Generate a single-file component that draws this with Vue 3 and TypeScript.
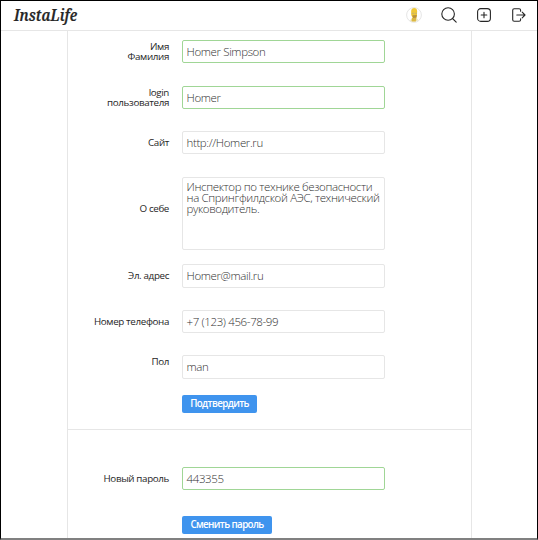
<script setup lang="ts">
interface Field {
  id: string
  label: string[]
  value: string[]
  valid?: boolean
}

const profile: Field[] = [
  { id: 'name', label: ['Имя', 'Фамилия'], value: ['Homer Simpson'], valid: true },
  { id: 'login', label: ['login', 'пользователя'], value: ['Homer'], valid: true },
  { id: 'site', label: ['Сайт'], value: ['http://Homer.ru'] },
  {
    id: 'about',
    label: ['О себе'],
    value: ['Инспектор по технике безопасности', 'на Спрингфилдской АЭС, технический', 'руководитель.'],
  },
  { id: 'email', label: ['Эл. адрес'], value: ['Homer@mail.ru'] },
  { id: 'phone', label: ['Номер телефона'], value: ['+7 (123) 456-78-99'] },
  { id: 'gender', label: ['Пол'], value: ['man'] },
]
const password: Field = { id: 'password', label: ['Новый пароль'], value: ['443355'], valid: true }
</script>

<template>
  <div class="page">
    <header class="header">
      <div class="logo">InstaLife</div>
      <nav class="nav">
        <svg class="avatar" viewBox="0 0 16 16">
          <circle cx="8" cy="8" r="7.4" fill="#fff" stroke="#dedede" stroke-width=".8" />
          <path d="M5.2 3.8Q5.6 1 8.2 1Q11.1 1.1 11.1 4.2L11 8.7L10.2 11.3H6.8L5.2 8Z" fill="#efc838" />
          <path d="M6.4 8.2L10.8 8L10.3 10.8L7 11Z" fill="#b8923f" />
          <path d="M5.8 5.8H8V7.1H5.8ZM8.7 5.8H11V7H8.7Z" fill="#cdb765" />
          <path d="M3.8 13.4L6 11H10.6L12.3 13.2Q8.5 15.8 3.8 13.4Z" fill="#eee3b8" />
          <path d="M6 11H10.2L9.8 14.4H5.6Z" fill="#dcb843" />
        </svg>
        <svg class="icon search" viewBox="0 0 16 16">
          <circle cx="7.1" cy="7" r="6.3" /><path d="M11.5 11.5L15.2 15.2" />
        </svg>
        <svg class="icon add" viewBox="0 0 14 14">
          <rect x=".6" y=".6" width="12.8" height="12.8" rx="3.2" /><path d="M7 4.2V9.8M4.2 7H9.8" />
        </svg>
        <svg class="icon exit" viewBox="0 0 14 14">
          <path d="M8.6 3.2V2.2Q8.6.7 7.1.7H2.2Q.7.7.7 2.2V11.8Q.7 13.3 2.2 13.3H7.1Q8.6 13.3 8.6 11.8V10.8M4.8 7H13M10.2 4.2L13 7L10.2 9.8" />
        </svg>
      </nav>
    </header>

    <main class="card">
      <section class="profile">
        <div v-for="f in profile" :key="f.id" class="row" :class="f.id">
          <div class="label"><div v-for="l in f.label" :key="l">{{ l }}</div></div>
          <div class="field" :class="{ valid: f.valid }"><div v-for="v in f.value" :key="v">{{ v }}</div></div>
        </div>
        <button class="button submit">Подтвердить</button>
      </section>
      <section class="security">
        <div class="row">
          <div class="label"><div>{{ password.label[0] }}</div></div>
          <div class="field valid"><div>{{ password.value[0] }}</div></div>
        </div>
        <button class="button change">Сменить пароль</button>
      </section>
    </main>
  </div>
</template>

<style>
body {
  margin: 0;
  overflow: hidden;
}
</style>

<style scoped>
.page {
  box-sizing: border-box;
  display: flex;
  flex-direction: column;
  width: 538px;
  height: 540px;
  overflow: hidden;
  border: 1px solid #000;
  border-bottom: 2px solid #808080;
  background: #fff;
  font-family: "Open Sans", "Noto Sans", sans-serif;
}
.header {
  box-sizing: border-box;
  display: flex;
  flex: none;
  align-items: center;
  justify-content: space-between;
  height: 30px;
  padding: 0 11.5px 2px 13px;
  border-bottom: 1px solid #e6e6e6;
}
.logo {
  color: #262626;
  font: italic 600 16.5px/20px "Noto Serif", "Droid Serif", "Liberation Serif", serif;
  -webkit-text-stroke: 0.2px #262626;
  transform: scaleX(0.865);
  transform-origin: left center;
}
.nav {
  display: flex;
  align-items: center;
}
.avatar {
  width: 16px;
  height: 16px;
}
.icon {
  fill: none;
  stroke: #262626;
  stroke-width: 1.1;
  stroke-linecap: round;
  stroke-linejoin: round;
}
.search {
  width: 16px;
  height: 16px;
  margin-left: 19px;
}
.add {
  width: 14px;
  height: 14px;
  margin-left: 20px;
}
.exit {
  width: 14px;
  height: 14px;
  margin-left: 21px;
}
.card {
  box-sizing: border-box;
  flex: 1;
  width: 405px;
  margin-left: 66px;
  border: solid #e6e6e6;
  border-width: 0 1px;
}
.profile {
  box-sizing: border-box;
  height: 399px;
  padding-top: 9px;
  border-bottom: 1px solid #e6e6e6;
}
.security {
  padding-top: 37px;
}
.row {
  display: grid;
  grid-template-columns: 101px 203px;
  column-gap: 13px;
  align-items: center;
  height: 23px;
  margin-bottom: 23px;
}
.login {
  margin-bottom: 22px;
}
.about {
  height: 73px;
  margin-bottom: 14px;
}
.about .label {
  margin-top: -10px;
}
.email {
  height: 24px;
  margin-bottom: 22px;
}
.phone {
  margin-bottom: 22px;
}
.gender {
  height: 24px;
  margin-bottom: 16px;
}
.gender .label {
  margin-top: -10px;
}
.label {
  color: #262626;
  font-size: 9.8px;
  line-height: 9.5px;
  letter-spacing: -0.36px;
  text-align: right;
  white-space: nowrap;
}
.field {
  box-sizing: border-box;
  height: 100%;
  padding: 4px 3px 0 3.5px;
  border: 1px solid #e6e6e6;
  border-radius: 2px;
  color: #333;
  font-size: 11.5px;
  font-weight: 300;
  line-height: 13px;
  letter-spacing: -0.37px;
  white-space: nowrap;
}
.about .field {
  line-height: 10.8px;
}
.valid {
  border-color: #a0d696;
}
.button {
  display: block;
  height: 18px;
  margin: 0 0 0 114px;
  padding: 0;
  border: 0;
  border-radius: 2px;
  background: #3f94ee;
  color: #fff;
  font: 600 9.8px/18px "Open Sans", "Noto Sans", sans-serif;
  letter-spacing: -0.62px;
  text-align: center;
  white-space: nowrap;
}
.submit {
  width: 75px;
}
.change {
  width: 90px;
  margin-top: 26px;
}
</style>
